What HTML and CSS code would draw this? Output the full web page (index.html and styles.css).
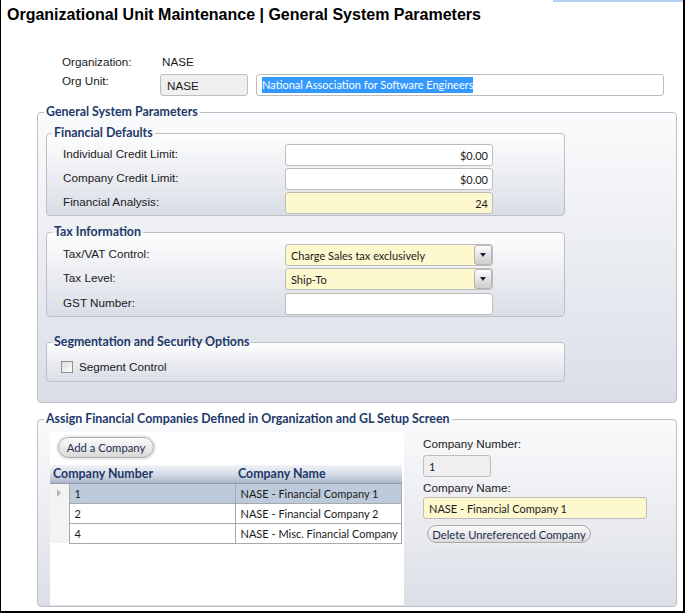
FILE: index.html
```html
<!DOCTYPE html>
<html>
<head>
<meta charset="utf-8">
<link rel="stylesheet" href="styles.css">
</head>
<body>
<div class="frame">
  <h1 class="title">Organizational Unit Maintenance | General System Parameters</h1>
  <div class="org">
    <div class="org-row"><span class="lbl lbl-org">Organization:</span><span class="val">NASE</span></div>
    <div class="org-row org-unit">
      <span class="lbl lbl-unit">Org Unit:</span>
      <span class="field field-ro code">NASE</span>
      <span class="field name"><span class="sel">National Association for Software Engineers</span></span>
    </div>
  </div>

  <fieldset class="group outer">
    <legend>General System Parameters</legend>

    <fieldset class="group inner fin">
      <legend>Financial Defaults</legend>
      <div class="row"><span class="lbl">Individual Credit Limit:</span><span class="field num">$0.00</span></div>
      <div class="row"><span class="lbl">Company Credit Limit:</span><span class="field num">$0.00</span></div>
      <div class="row"><span class="lbl">Financial Analysis:</span><span class="field field-req num">24</span></div>
    </fieldset>

    <fieldset class="group inner tax">
      <legend>Tax Information</legend>
      <div class="row"><span class="lbl">Tax/VAT Control:</span><span class="field field-req select"><span class="opt">Charge Sales tax exclusively</span><span class="drop"></span></span></div>
      <div class="row"><span class="lbl">Tax Level:</span><span class="field field-req select"><span class="opt">Ship-To</span><span class="drop"></span></span></div>
      <div class="row row-gap3"><span class="lbl">GST Number:</span><span class="field"></span></div>
    </fieldset>

    <fieldset class="group inner seg">
      <legend>Segmentation and Security Options</legend>
      <div class="check-row"><span class="checkbox"></span><span class="lbl">Segment Control</span></div>
    </fieldset>
  </fieldset>

  <fieldset class="group assign">
    <legend>Assign Financial Companies Defined in Organization and GL Setup Screen</legend>
    <div class="assign-body">
      <div class="grid-panel">
        <div class="toolbar"><button class="pill add-btn">Add a Company</button></div>
        <table class="grid">
          <thead>
            <tr><th class="h-num" colspan="2">Company Number</th><th class="h-name">Company Name</th></tr>
          </thead>
          <tbody>
            <tr class="cur"><td class="rh"><span class="arrow"></span></td><td class="c c-num">1</td><td class="c c-name">NASE - Financial Company 1</td></tr>
            <tr><td class="rh"></td><td class="c c-num">2</td><td class="c c-name">NASE - Financial Company 2</td></tr>
            <tr><td class="rh"></td><td class="c c-num">4</td><td class="c c-name">NASE - Misc. Financial Company</td></tr>
          </tbody>
        </table>
      </div>
      <div class="detail">
        <div class="lbl">Company Number:</div>
        <div class="field field-ro cnum">1</div>
        <div class="lbl lbl-cname">Company Name:</div>
        <div class="field field-req cname">NASE - Financial Company 1</div>
        <button class="pill del-btn">Delete Unreferenced Company</button>
      </div>
    </div>
  </fieldset>
</div>
</body>
</html>
```

FILE: styles.css
```css
* { box-sizing: border-box; }

body {
  margin: 0;
  background: #fff;
}

.frame {
  position: relative;
  width: 685px;
  height: 613px;
  border-left: 1px solid #000;
  border-right: 2px solid #000;
  border-bottom: 2px solid #000;
  font-family: "Liberation Sans", Arial, sans-serif;
  font-size: 11.7px;
  color: #1a1a1a;
}

.frame::before {
  content: "";
  position: absolute;
  top: 0;
  right: 0;
  width: 130px;
  height: 2px;
  background: #b6cff2;
}

.title {
  margin: 0;
  height: 25px;
  padding: 5px 0 0 6px;
  font: bold 16px/20px "Liberation Sans", Arial, sans-serif;
  color: #000;
}

.lbl { line-height: 14px; }

.org {
  margin-top: 30px;
  padding-left: 61px;
}

.org-row {
  display: flex;
  line-height: 14px;
}

.lbl-org { width: 100px; }
.lbl-unit { width: 98px; }

.org-unit { margin-top: 5px; }

.field {
  display: flex;
  align-items: center;
  height: 22px;
  padding: 0 5px;
  border: 1px solid #bdbdbd;
  border-radius: 3px;
  background: #fff;
  font: 11px Lato, "Noto Sans", sans-serif;
  color: #1a1a1a;
  white-space: nowrap;
  overflow: hidden;
}

.field-ro { background: #efefef; }
.field-req { background: #fef8cf; }

.code {
  width: 88px;
  padding-left: 6px;
  font: 11.7px "Liberation Sans", Arial, sans-serif;
}

.name {
  width: 408px;
  margin-left: 8px;
}

.sel {
  background: #3399ff;
  color: #fff;
  line-height: 16px;
}

/* group boxes */
.group {
  margin: 0;
  min-width: 0;
  border: 1px solid #bdbfc4;
  border-radius: 4px;
}

.group > legend {
  padding: 0 2px;
  font: bold 12.4px/14px Lato, "Noto Sans", sans-serif;
  color: #1d3969;
}

.outer {
  width: 640px;
  margin: 9px 0 0 36px;
  padding: 7px 8px 20px;
  background: linear-gradient(#fafbfc, #dadee7);
}

.outer > legend { margin-left: -2px; }

.inner {
  width: 519px;
  padding: 4px 0 1px 16px;
  background: linear-gradient(#fefefe, #d9dde6);
}

.inner > legend { margin-left: -11px; }

.tax {
  margin-top: 9px;
  padding-top: 5px;
}

.seg {
  margin-top: 18px;
  padding: 11px 0 7px 14px;
}

.seg > legend { margin-left: -9px; }

.row {
  display: flex;
  align-items: center;
  height: 22px;
}

.row + .row { margin-top: 2px; }
.row.row-gap3 { margin-top: 3px; }

.row .lbl {
  width: 222px;
  padding-bottom: 2px;
}

.row .field { width: 208px; }

.num {
  justify-content: flex-end;
  padding-right: 4px;
}

.select { padding-right: 0; }

.opt { flex: 1; }

.drop {
  display: flex;
  align-items: center;
  justify-content: center;
  width: 18px;
  height: 20px;
  border: 1px solid #b3b3b3;
  border-radius: 3px;
  background: linear-gradient(#fdfdfd, #e4e4e4 50%, #cfcfcf);
}

.drop::after {
  content: "";
  border-left: 3px solid transparent;
  border-right: 3px solid transparent;
  border-top: 4px solid #14223a;
}

.check-row {
  display: flex;
  align-items: center;
  height: 14px;
}

.checkbox {
  width: 12px;
  height: 12px;
  margin-right: 6px;
  border: 1px solid #8e8f8f;
  background: linear-gradient(135deg, #dcdcdc, #fdfdfd);
}

/* assign */
.assign {
  width: 640px;
  margin: 9px 0 0 36px;
  padding: 6px 0 1px 12px;
  background: linear-gradient(#f9fafb, #dcdfe7);
}

.assign > legend { margin-left: -6px; }

.assign-body {
  display: flex;
  height: 173px;
}

.grid-panel {
  width: 354px;
  background: #fff;
}

.toolbar { padding: 5px 8px 7px; }

.pill {
  display: block;
  height: 21px;
  padding: 0;
  border: 1px solid #a9a9a9;
  border-radius: 11px;
  background: linear-gradient(#fbfbfb, #ebebeb 50%, #d9d9d9);
  box-shadow: 0 0 0 2px #ededed;
  font: 11.3px Lato, "Noto Sans", sans-serif;
  color: #1e2f4d;
  white-space: nowrap;
}

.add-btn { width: 96px; }

.grid {
  width: 352px;
  border-collapse: collapse;
  font: 11px Lato, "Noto Sans", sans-serif;
  color: #1a1a1a;
}

.grid th {
  height: 18px;
  padding: 0 0 0 3px;
  text-align: left;
  font-size: 12.4px;
  font-weight: bold;
  color: #1d3969;
  background: linear-gradient(#f1f3f7, #d3dae5 55%, #aab6c9);
  border-bottom: 1px solid #8c9ab0;
}

.grid .h-num { width: 185px; }

.grid td {
  height: 20px;
  padding: 0;
}

.grid .rh {
  width: 19px;
  background: #f3f3f3;
}

.grid .c {
  border: 1px solid #a9a9a9;
  padding-left: 5px;
  background: #fff;
}

.grid .c-num { width: 166px; }

.grid .cur .c {
  background: #bccadb;
  border-color: #bccadb #a9a9a9 #a9a9a9;
}

.arrow {
  display: block;
  width: 0;
  height: 0;
  margin-left: 7px;
  border-top: 4px solid transparent;
  border-bottom: 4px solid transparent;
  border-left: 4px solid #b4b4b4;
}

.detail { padding: 5px 0 0 19px; }

.cnum {
  width: 68px;
  margin-top: 4px;
}

.lbl-cname { margin-top: 4px; }

.cname {
  width: 224px;
  margin-top: 2px;
}

.del-btn {
  width: 164px;
  height: 18px;
  margin: 6px 0 0 4px;
}
```
